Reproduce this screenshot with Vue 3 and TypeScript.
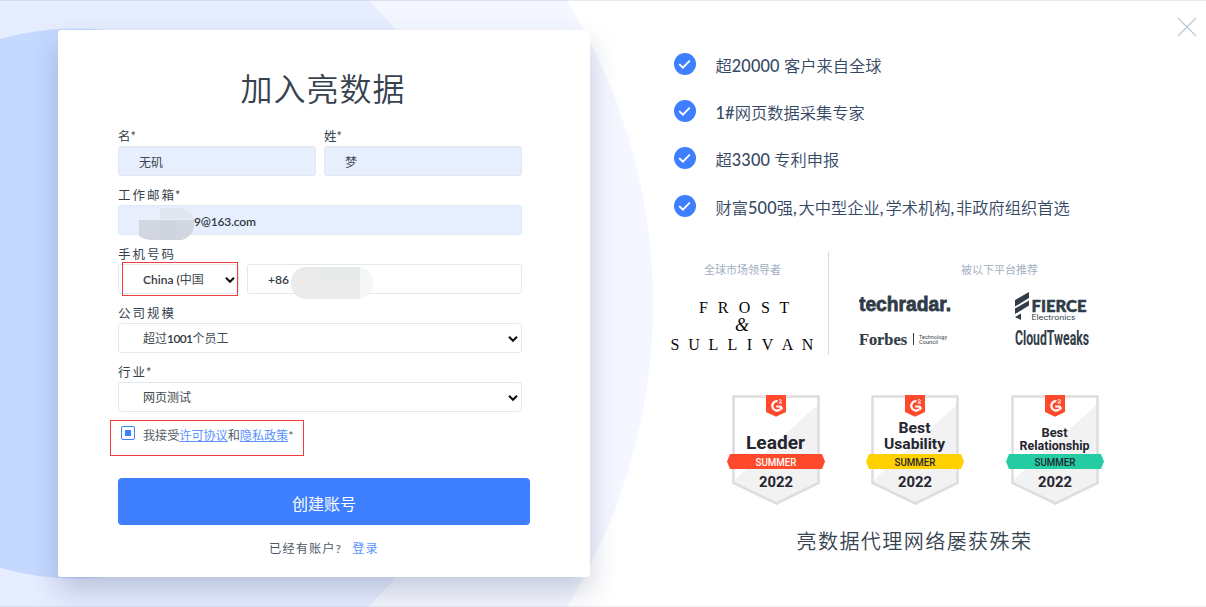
<script setup lang="ts">
interface Badge {
  lines: string[]
  widths: number[]
  size: number
  baselines: number[]
  tone: string
}

interface Run {
  text: string
  latin: boolean
}

const benefits: Run[][] = [
  '超20000 客户来自全球',
  '1#网页数据采集专家',
  '超3300 专利申报',
  '财富500强,大中型企业,学术机构,非政府组织首选',
].map((line) =>
  line.split(/([\d#, ]+)/).filter(Boolean).map((text) => ({ text, latin: /^[\d#, ]+$/.test(text) })),
)

const badges: Badge[] = [
  { lines: ['Leader'], widths: [59], size: 18.5, baselines: [54], tone: 'red' },
  { lines: ['Best', 'Usability'], widths: [32, 61], size: 15.5, baselines: [38.2, 54], tone: 'yellow' },
  { lines: ['Best', 'Relationship'], widths: [26, 70], size: 12, baselines: [42, 54.5], tone: 'green' },
]
</script>

<template>
  <main class="page">
    <svg class="backdrop" width="1206" height="607" viewBox="0 0 1206 607">
      <circle cx="76" cy="303.5" r="577" fill="#f4f7ff" />
      <circle cx="76" cy="303.5" r="421" fill="#e6edff" />
      <circle cx="76" cy="303.5" r="275" fill="#c5d8ff" />
    </svg>

    <section class="card">
      <h1>加入亮数据</h1>
      <form @submit.prevent>
        <div class="pair">
          <label class="field"><span class="label tight">名<em>*</em></span><span class="box filled">无矶</span></label>
          <label class="field"><span class="label tight">姓<em>*</em></span><span class="box filled">梦</span></label>
        </div>
        <label class="field">
          <span class="label">工作邮箱<em>*</em></span>
          <span class="box filled email"><b>9@163.com</b>
            <svg class="smudge mail-smudge" width="62" height="34" viewBox="0 0 62 34">
              <rect x="0" y="1" width="42" height="24" rx="12" fill="#e9effb" />
              <path d="M27 1H47Q58 2 61 12H27Z" fill="#e2e6f0" />
              <path d="M6 13H61V20Q59 30 49 33H18Q9 32 6 29Z" fill="#d1d6e0" />
              <path d="M27 13H43V33H27Z" fill="#ced3dd" />
            </svg>
          </span>
        </label>
        <div class="field">
          <span class="label">手机号码</span>
          <div class="phone">
            <span class="box select country"><span><b>China (</b>中国</span>
              <svg class="chevron" width="10" height="8" viewBox="0 0 10 8"><path d="M1 1.7L5 5.8L9 1.7" /></svg>
              <i class="mark country-mark"></i>
            </span>
            <span class="box number"><b>+86</b>
              <svg class="smudge phone-smudge" width="83" height="32" viewBox="0 0 83 32">
                <rect width="82" height="32" rx="15" fill="#f5f7f7" />
                <path d="M13 0H69V32H13Q0 29 0 16Q0 3 13 0Z" fill="#ebebeb" />
                <rect x="29" width="40" height="13" fill="#e8e9e9" />
              </svg>
            </span>
          </div>
        </div>
        <div class="field">
          <span class="label">公司规模</span>
          <span class="box select"><span>超过<b class="count">1001</b>个员工</span>
            <svg class="chevron" width="10" height="8" viewBox="0 0 10 8"><path d="M1 1.7L5 5.8L9 1.7" /></svg>
          </span>
        </div>
        <div class="field">
          <span class="label">行业<em>*</em></span>
          <span class="box select"><span>网页测试</span>
            <svg class="chevron" width="10" height="8" viewBox="0 0 10 8"><path d="M1 1.7L5 5.8L9 1.7" /></svg>
          </span>
        </div>
        <div class="terms">
          <span class="check"></span>
          <span>我接受<a>许可协议</a>和<a>隐私政策</a>*</span>
          <i class="mark terms-mark"></i>
        </div>
        <button type="submit">创建账号</button>
      </form>
      <p class="signin">已经有账户? <a>登录</a></p>
    </section>

    <section class="info">
      <ul class="benefits">
        <li v-for="(runs, n) in benefits" :key="n">
          <svg width="22" height="22" viewBox="0 0 22 22">
            <circle cx="11" cy="11" r="11" fill="#3d7fff" />
            <path d="M5.2 11.1L8.9 14.7L15.8 7.6" fill="none" stroke="#fff" stroke-width="1.9" />
          </svg>
          <p><span v-for="(run, i) in runs" :key="i" :class="{ latin: run.latin, comma: run.text === ',' }">{{ run.text }}</span></p>
        </li>
      </ul>

      <div class="press">
        <div class="leader">
          <p>全球市场领导者</p>
          <svg width="150" height="60" viewBox="0 0 150 60" class="frost">
            <g font-size="16">
              <text v-for="(c, i) in ['F','R','O','S','T']" :key="c" :x="[33.5,53,74.5,95.5,114.5][i]" y="14.5">{{ c }}</text>
              <text v-for="(c, i) in ['S','U','L','L','I','V','A','N']" :key="i" :x="[5,24,43.5,62.5,79.5,97.5,117.5,137.5][i]" y="51.5">{{ c }}</text>
            </g>
            <text x="72" y="33" class="ampersand">&amp;</text>
          </svg>
        </div>
        <div class="featured">
          <p>被以下平台推荐</p>
          <svg width="248" height="68" viewBox="0 0 248 68" class="logos">
            <text x="0" y="22.5" class="techradar" textLength="92" lengthAdjust="spacingAndGlyphs">techradar.</text>
            <text x="0" y="57" class="forbes" textLength="48" lengthAdjust="spacingAndGlyphs">Forbes</text>
            <path d="M54.5 45V57" stroke="#303c48" stroke-width="1" />
            <text x="60" y="50.6" class="council" textLength="28" lengthAdjust="spacingAndGlyphs">Technology</text>
            <text x="60" y="56.4" class="council" textLength="19" lengthAdjust="spacingAndGlyphs">Council</text>
            <path d="M156 12L170 4V10L156 18.5ZM156 20.5L170 12.5V17.5L156 26ZM156 29L162 25.5V32Z" fill="#303c48" />
            <text x="172.5" y="23.5" class="fierce" textLength="55" lengthAdjust="spacingAndGlyphs">FIERCE</text>
            <text x="172.5" y="31.5" class="electronics" textLength="44" lengthAdjust="spacingAndGlyphs">Electronics</text>
            <text transform="translate(156 57) scale(1 1.6)" class="cloud" textLength="74" lengthAdjust="spacingAndGlyphs">CloudTweaks</text>
          </svg>
        </div>
      </div>

      <div class="badges">
        <svg v-for="(badge, n) in badges" :key="n" width="98" height="112" viewBox="0 0 98 112" :class="badge.tone">
          <path d="M6.5 1.5H91.5V88L49.5 108.5L6.5 88Z" fill="#fff" />
          <path d="M91.5 9V88L49.5 108.5L6.5 88V86Z" fill="#f2f2f2" />
          <path d="M6.5 1.5H91.5V88L49.5 108.5L6.5 88Z" fill="none" stroke="#dedede" stroke-width="2.6" />
          <path d="M39 0H59V17L49 21.7L39 17Z" fill="#ff492c" />
          <path d="M50.4 6.2A4.7 4.7 0 1 0 53.2 14.3" fill="none" stroke="#fff" stroke-width="2.2" />
          <path d="M49.2 10.4H54.2L56 13.2L54.2 15.6L52.4 12.4H49.2Z" fill="#fff" />
          <path d="M51.8 5.3Q53.8 3.6 54.4 5.2Q54.6 6.2 51.9 8H55" fill="none" stroke="#fff" stroke-width="1" />
          <text
            v-for="(line, i) in badge.lines" :key="line" x="48.5" :y="badge.baselines[i]"
            :font-size="badge.size" :textLength="badge.widths[i]" lengthAdjust="spacingAndGlyphs"
          >{{ line }}</text>
          <path class="ribbon" d="M3 59H95L98 66.5L95 74H3L0 66.5Z" />
          <text x="49" y="70.5" font-size="11" textLength="41" lengthAdjust="spacingAndGlyphs" class="season">SUMMER</text>
          <text x="49" y="91.6" font-size="15" textLength="34" lengthAdjust="spacingAndGlyphs">2022</text>
        </svg>
      </div>
      <h2>亮数据代理网络屡获殊荣</h2>
    </section>

    <svg class="close" width="20" height="20" viewBox="0 0 20 20"><path d="M1 1L19 19M19 1L1 19" stroke="#b9c7d6" stroke-width="1.2" /></svg>
  </main>
</template>

<style>
html, body { margin: 0; overflow: hidden; }
</style>

<style scoped>
* { box-sizing: border-box; }
.page {
  position: relative;
  display: flex;
  width: 1206px;
  height: 607px;
  overflow: hidden;
  background: #fff;
  color: #36434f;
  font-family: Lato, "Noto Sans CJK SC", sans-serif;
}
.page::after {
  content: "";
  position: absolute;
  inset: 0;
  border-top: 1px solid rgba(80, 95, 120, 0.13);
  border-bottom: 1px solid rgba(80, 95, 120, 0.1);
  pointer-events: none;
}
.backdrop { position: absolute; inset: 0; }
.card {
  position: relative;
  flex: none;
  width: 532px;
  height: 547px;
  margin: 30px 0 0 58px;
  padding: 34px 60px 0;
  background: #fff;
  border-radius: 3px;
  box-shadow: 0 14px 28px rgba(35, 55, 100, 0.23);
}
h1 {
  height: 53px;
  margin: 0 0 0 -2px;
  font: 350 32px/46px "Noto Sans CJK SC", sans-serif;
  letter-spacing: 1px;
  text-align: center;
}
.pair { display: grid; grid-template-columns: 198px 198px; gap: 8px; }
.field { display: block; width: 404px; }
.pair .field { width: 198px; }
.label {
  display: block;
  height: 29px;
  padding-top: 11px;
  font-size: 12.5px;
  line-height: 17px;
  letter-spacing: 2px;
}
.label em { margin-left: -1px; font-style: normal; }
.label.tight { letter-spacing: 1px; }
.box {
  position: relative;
  display: flex;
  align-items: center;
  height: 30px;
  padding: 1px 3px 0 20px;
  border: 1px solid #e1e8ef;
  border-radius: 3px;
  background: #fff;
  color: #404950;
  font-size: 12px;
  line-height: 18px;
}
.box.filled { padding-top: 3px; background: #e7eefd; }
.box b { color: #333b42; font-weight: 600; }
.count { letter-spacing: -0.6px; }
.box.select { padding-left: 24px; justify-content: space-between; }
.box.email { padding-left: 75px; }
.email b { letter-spacing: -0.15px; }
.phone { display: grid; grid-template-columns: 121px 275px; gap: 8px; }
.chevron { fill: none; stroke: #0b0d10; stroke-width: 2; }
.smudge { position: absolute; }
.mail-smudge { left: 14px; top: 1px; }
.phone-smudge { left: 43px; top: 2px; }
.mark { position: absolute; border: 1px solid #f23b3f; }
.country-mark { left: 3px; top: -3px; width: 116px; height: 34px; }
.terms {
  position: relative;
  display: flex;
  align-items: center;
  height: 66px;
  padding: 0 0 19px 3px;
  font-size: 12.1px;
  line-height: 18px;
  color: #515c66;
}
.check {
  width: 14px;
  height: 14px;
  margin: -5px 8px 0 0;
  border: 1px solid #3d7fff;
  border-radius: 2px;
  background: #3d7fff content-box;
  padding: 3px;
}
.terms-mark { left: -8px; top: 8px; width: 194px; height: 36px; }
a { color: #5c93ff; }
.terms a { text-decoration: underline; }
button {
  display: block;
  width: 412px;
  height: 47px;
  padding: 2px 0 0;
  border: 0;
  border-radius: 4px;
  background: #3d7fff;
  color: #fff;
  font: 400 16px "Noto Sans CJK SC", sans-serif;
}
.signin {
  margin: 14px 0 0;
  font-size: 12.2px;
  line-height: 20px;
  letter-spacing: 1.1px;
  text-align: center;
  color: #4f5b6b;
}
.signin a { margin-left: 6px; }
.info { position: relative; flex: none; width: 534px; margin-left: 80px; }
.benefits { margin: 0; padding: 40px 0 0 4px; list-style: none; }
.benefits li {
  display: flex;
  align-items: center;
  height: 47.3px;
  gap: 19.5px;
  color: #354864;
  font-size: 16.25px;
  font-weight: 350;
}
.benefits p { margin: 0; padding-top: 2px; white-space: pre; }
.latin { font-weight: 500; letter-spacing: 0.15px; }
.latin.comma { letter-spacing: 1.9px; }
.benefits svg { flex: none; }
.press { display: flex; height: 103px; margin-top: 23px; }
.press p {
  margin: 0;
  padding-top: 9px;
  color: #9fb0c1;
  font-size: 11px;
  line-height: 17px;
  text-align: center;
}
.leader { width: 159px; border-right: 1px solid #d3dce5; }
.leader p { padding-right: 13px; }
.frost { display: block; margin-top: 20px; }
.frost text { fill: #080808; text-anchor: middle; font-family: "Liberation Serif", serif; }
.frost .ampersand { font: italic 18px "Liberation Serif", serif; }
.featured { width: 344px; padding-left: 30px; }
.featured p { padding-right: 33px; }
.logos { display: block; margin-top: 10px; }
.logos text { fill: #303c48; }
.techradar { font: bold 21px "Liberation Sans", sans-serif; stroke: #303c48; stroke-width: 0.8; }
.forbes { font: bold 17px "Liberation Serif", serif; stroke: #303c48; stroke-width: 0.2; }
.council { font: 5.6px Roboto, sans-serif; }
.fierce { font: 900 17px Lato, sans-serif; stroke: #303c48; stroke-width: 0.5; }
.electronics { font: 7px Inter, sans-serif; }
.cloud { font: bold 13px Roboto, sans-serif; }
.badges { display: flex; gap: 41.3px; margin: 40px 0 0 57px; }
.badges svg { flex: none; }
.badges text { text-anchor: middle; fill: #252530; font-family: Roboto, sans-serif; font-weight: 700; }
.badges .season { font-weight: 500; }
.red .ribbon { fill: #ff492c; }
.yellow .ribbon { fill: #ffd100; }
.green .ribbon { fill: #23cca2; }
.badges .red .season { fill: #fff; }
h2 {
  margin: 19px 0 0 126.5px;
  font: 350 20px/30px "Noto Sans CJK SC", sans-serif;
  letter-spacing: 1.45px;
  white-space: nowrap;
}
.close { position: absolute; right: 9px; top: 17px; }
</style>
